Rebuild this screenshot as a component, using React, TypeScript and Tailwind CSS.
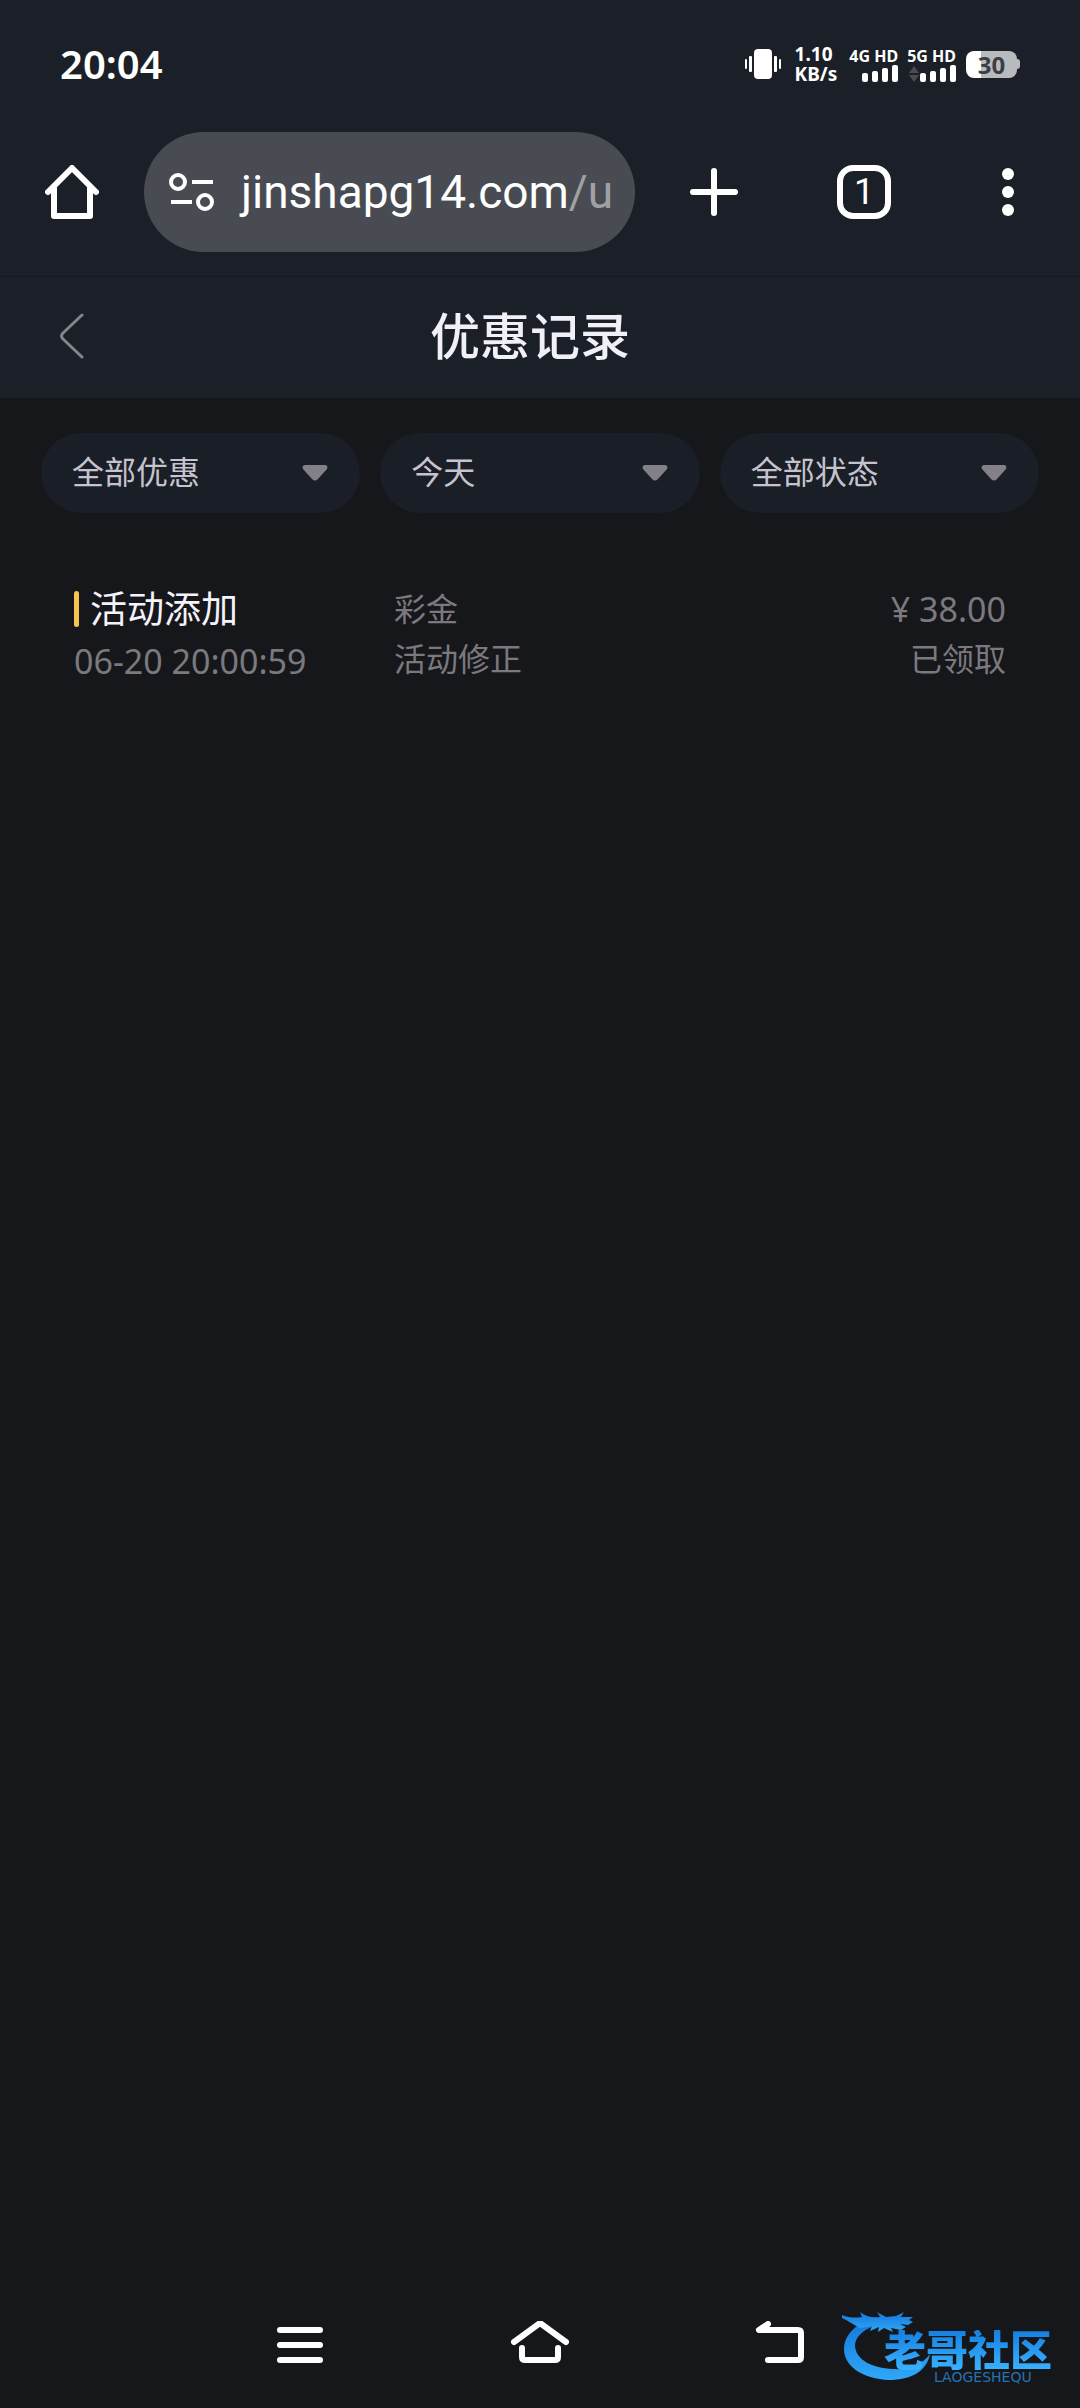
import type { ReactNode } from 'react'

const filters = [
  { id: 'type', label: '优惠类型', options: ['全部优惠', '彩金'] },
  { id: 'date', label: '日期', options: ['今天', '昨天', '近7天'] },
  { id: 'status', label: '领取状态', options: ['全部状态', '已领取'] },
]

const records = [
  {
    title: '活动添加',
    time: '06-20 20:00:59',
    kind: '彩金',
    note: '活动修正',
    amount: '¥ 38.00',
    status: '已领取',
  },
]

function Signal({ label, roaming }: { label: string; roaming?: boolean }) {
  return (
    <div className="flex flex-col items-end">
      <span className="text-[16px] leading-[18px] font-bold">{label}</span>
      <svg width="48" height="17" viewBox="0 0 48 17" fill="currentColor" aria-hidden="true">
        {roaming && <path d="M1 8 6 1l5 7zM1 10l5 7 5-7z" fill="#4b4c50" />}
        <rect x="12" y="8" width="6" height="9" rx="2" />
        <rect x="22" y="6" width="6" height="11" rx="2" />
        <rect x="32" y="3" width="6" height="14" rx="2" />
        <rect x="42" y="0" width="6" height="17" rx="2" />
      </svg>
    </div>
  )
}

function StatusBar() {
  return (
    <div className="flex h-32 items-center justify-between px-15">
      <time className="text-[40px] leading-[48px] font-semibold">20:04</time>
      <div className="flex items-center">
        <svg width="36" height="30" viewBox="0 0 36 30" fill="currentColor" className="mr-[14px]" aria-hidden="true">
          <rect x="9" width="18" height="30" rx="4" />
          <rect x="0" y="10" width="2" height="10" rx="1" />
          <rect x="4" y="7" width="3" height="16" rx="1" />
          <rect x="29" y="7" width="3" height="16" rx="1" />
          <rect x="34" y="10" width="2" height="10" rx="1" />
        </svg>
        <div className="mr-3 text-[19px] leading-[20px] font-bold whitespace-nowrap">
          <p>1.10</p>
          <p>KB/s</p>
        </div>
        <div className="mr-[10px] flex gap-[9px] whitespace-nowrap">
          <Signal label="4G HD" />
          <Signal label="5G HD" roaming />
        </div>
        <div className="flex items-center">
          <div className="flex h-[27px] w-[51px] items-center justify-center rounded-lg bg-linear-to-r from-white from-30% to-[#b9babe] to-30% text-[24px] leading-[27px] font-bold text-[#3d3e43]">
            30
          </div>
          <div className="h-[10px] w-[3px] rounded-r-sm bg-[#b9babe]" />
        </div>
      </div>
    </div>
  )
}

function BarButton({ label, className, children }: { label: string; className: string; children: ReactNode }) {
  return (
    <button type="button" aria-label={label} className={className}>
      {children}
    </button>
  )
}

function BrowserBar() {
  return (
    <div className="flex h-[149px] items-start border-b border-[#16191f] pt-1">
      <BarButton label="主页" className="flex h-30 w-36 items-center justify-center">
        <svg width="54" height="54" viewBox="0 0 54 54" fill="none" stroke="currentColor" strokeWidth="6" strokeLinecap="round" strokeLinejoin="round" aria-hidden="true">
          <path d="M3 27 27 3l24 24M9 23v28h36V23" />
        </svg>
      </BarButton>
      <div className="flex h-30 min-w-0 flex-1 items-center rounded-full bg-[#494b52] pl-[25px]">
        <BarButton label="网站信息" className="mr-[26px] shrink-0">
          <svg width="46" height="38" viewBox="0 0 46 38" fill="none" stroke="currentColor" strokeWidth="4" aria-hidden="true">
            <circle cx="9" cy="9" r="7" />
            <circle cx="36" cy="29" r="7" />
            <path d="M23 9h21M2 29h21" />
          </svg>
        </BarButton>
        <button type="button" className="font-['Roboto',sans-serif] text-[46px] leading-[56px] whitespace-nowrap">
          jinshapg14.com<span className="text-[#a0a1a5]">/u</span>
        </button>
      </div>
      <BarButton label="新建标签页" className="flex h-30 w-[157px] items-center justify-center">
        <svg width="48" height="48" viewBox="0 0 48 48" stroke="currentColor" strokeWidth="6" strokeLinecap="round" aria-hidden="true">
          <path d="M24 3v42M3 24h42" />
        </svg>
      </BarButton>
      <button type="button" className="flex h-30 w-36 items-center justify-center">
        <span className="flex h-[54px] w-[54px] items-center justify-center rounded-2xl border-6 border-white font-['Roboto',sans-serif] text-[36px] leading-[42px]">
          1
        </span>
      </button>
      <BarButton label="更多" className="flex h-30 w-36 items-center justify-center">
        <svg width="12" height="48" viewBox="0 0 12 48" fill="currentColor" aria-hidden="true">
          <circle cx="6" cy="6" r="6" />
          <circle cx="6" cy="24" r="6" />
          <circle cx="6" cy="42" r="6" />
        </svg>
      </BarButton>
    </div>
  )
}

function PageHeader() {
  return (
    <div className="flex h-[121px] items-center pb-1 text-[#f1eff8]">
      <BarButton label="返回" className="flex h-full w-36 items-center justify-center">
        <svg width="24" height="46" viewBox="0 0 24 46" fill="none" stroke="#85848b" strokeWidth="3" strokeLinecap="round" aria-hidden="true">
          <path d="M22 2 3 20q-3 3 0 6l19 18" />
        </svg>
      </BarButton>
      <h1 className="flex-1 text-center text-[50px] leading-[60px] font-medium">优惠记录</h1>
      <div className="w-[164px]" />
    </div>
  )
}

function Filter({ id, label, options }: { id: string; label: string; options: string[] }) {
  return (
    <div className="relative min-w-0 flex-1">
      <select
        id={id}
        aria-label={label}
        className="h-20 w-full appearance-none rounded-full bg-[#1a1e26] px-[31px] pb-[2px] text-[32px] leading-[48px] text-[#c6c3ce]"
      >
        {options.map((option) => (
          <option key={option}>{option}</option>
        ))}
      </select>
      <svg
        width="26"
        height="16"
        viewBox="0 0 26 16"
        className="pointer-events-none absolute top-8 right-8"
        fill="#838087"
        aria-hidden="true"
      >
        <path d="M3 0h20c2 0 3 2 2 4L16 14q-3 3-6 0L1 4C0 2 1 0 3 0z" />
      </svg>
    </div>
  )
}

function Watermark() {
  return (
    <div className="absolute right-4 bottom-6 h-[74px] w-[222px]">
      <svg width="222" height="74" viewBox="0 0 222 74" aria-hidden="true">
        <defs>
          <linearGradient id="dragon" x1="0" y1="0" x2="0" y2="1">
            <stop offset="0" stopColor="#1478dc" />
            <stop offset="1" stopColor="#2fa8f8" />
          </linearGradient>
        </defs>
        <g fill="url(#dragon)">
          <path d="M24 11C9 18 2 28 2 39c0 18 20 30 45 31 22 0 38-9 41-26-9 12-22 16-37 15C30 58 14 50 13 36c0-8 6-15 19-20z" />
          <path d="M0 5c7 3 14 3 20 2l-2-5c7 5 13 6 20 5l-3-5 9 5 10-1 8-4-3 5h12l-4 3 4 2-5 3-8-1 6 3-5 3-10-2 2 4-9-4-6 4 1-5-9 4 2-5-12 2C12 15 5 10 0 8z" />
        </g>
      </svg>
      <p className="absolute top-5 left-[42px] bg-linear-to-b from-[#167fe0] to-[#39b2ff] bg-clip-text text-[42px] leading-[40px] font-black whitespace-nowrap text-transparent">
        老哥社区
      </p>
      <p className="absolute top-[61px] left-[92px] font-['DejaVu_Sans',sans-serif] text-[14px] leading-[12px] text-[#2572b4]">
        LAOGESHEQU
      </p>
    </div>
  )
}

function SystemNav() {
  const button = 'flex h-30 w-60 items-center justify-center'
  return (
    <nav className="relative flex justify-center pb-[3px] text-white">
      <BarButton label="最近任务" className={button}>
        <svg width="60" height="48" viewBox="0 0 60 48" stroke="currentColor" strokeWidth="6" strokeLinecap="round" aria-hidden="true">
          <path d="M10 9h40M10 24h40M10 39h40" />
        </svg>
      </BarButton>
      <BarButton label="主屏幕" className={button}>
        <svg width="60" height="48" viewBox="0 0 60 48" fill="none" stroke="currentColor" strokeWidth="6" strokeLinecap="round" strokeLinejoin="round" aria-hidden="true">
          <path d="M4 21 30 2l26 19M12 27v9q0 3 3 3h30q3 0 3-3v-9" />
        </svg>
      </BarButton>
      <BarButton label="后退" className={button}>
        <svg width="60" height="48" viewBox="0 0 60 48" fill="none" stroke="currentColor" strokeWidth="6" strokeLinecap="round" strokeLinejoin="round" aria-hidden="true">
          <path d="M18 3 9 9h39q3 0 3 3v24q0 3-3 3H18" />
        </svg>
      </BarButton>
      <Watermark />
    </nav>
  )
}

export default function App() {
  return (
    <div className="flex min-h-screen flex-col bg-[#16171a] font-['Noto_Sans','Noto_Sans_CJK_SC',sans-serif]">
      <header className="bg-[#1b1f27] text-white">
        <StatusBar />
        <BrowserBar />
        <PageHeader />
      </header>

      <main className="flex-1">
        <form className="flex gap-5 px-[41px] pt-[35px]">
          {filters.map((filter) => (
            <Filter key={filter.id} {...filter} />
          ))}
        </form>

        <ul className="px-[74px] pt-[71px] text-[32px] leading-[50px] text-[#7b797f]">
          {records.map((record) => (
            <li key={record.time} className="flex">
              <div className="w-80">
                <h2 className="flex items-center gap-[11px] text-[37px] leading-[50px] text-[#f4f2fa]">
                  <span className="h-9 w-[5px] rounded-full bg-[#f7c454]" />
                  {record.title}
                </h2>
                <p className="text-[34px] leading-[54px]">{record.time}</p>
              </div>
              <div className="flex-1">
                <p>{record.kind}</p>
                <p>{record.note}</p>
              </div>
              <div className="text-right">
                <p className="text-[34px]">{record.amount}</p>
                <p>{record.status}</p>
              </div>
            </li>
          ))}
        </ul>
      </main>

      <SystemNav />
    </div>
  )
}
